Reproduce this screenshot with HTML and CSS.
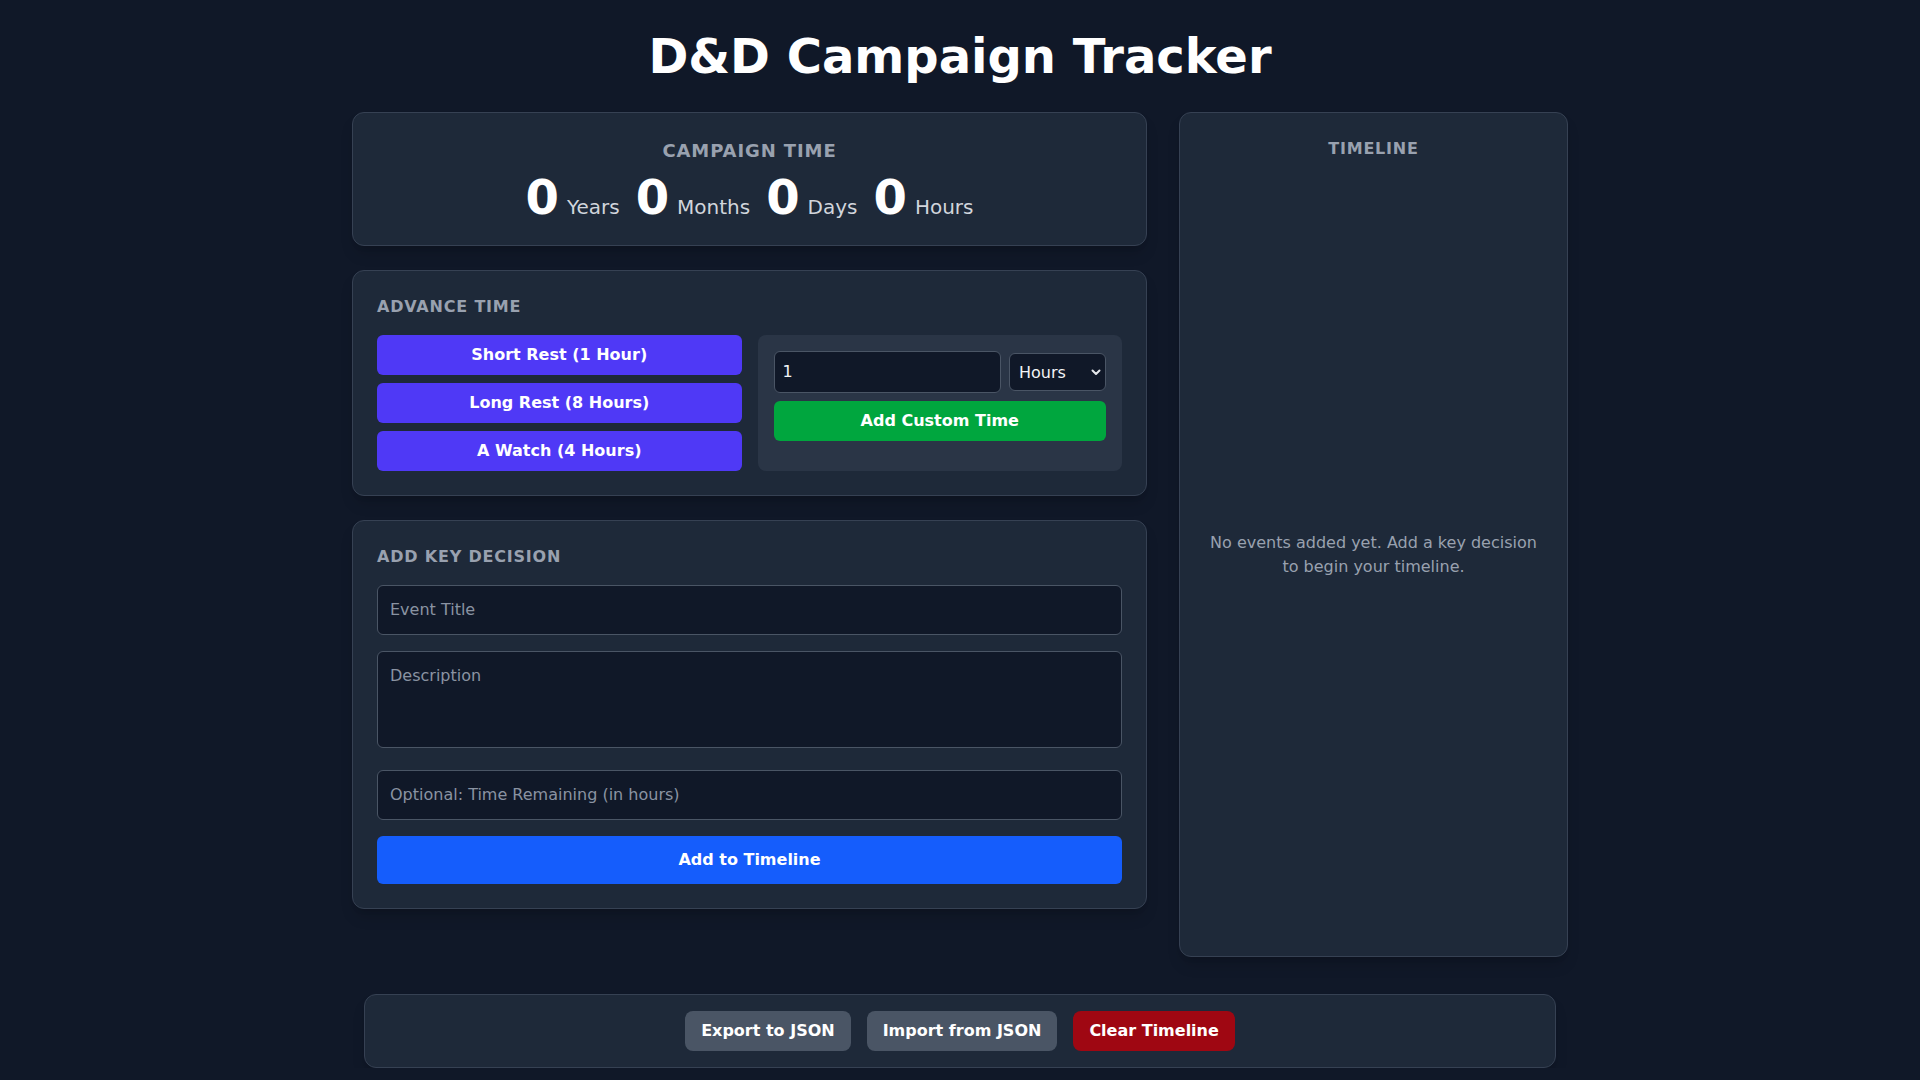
FILE: index.html
```html
<!DOCTYPE html>
<html lang="en">
<head>
<meta charset="utf-8">
<title>D&amp;D Campaign Tracker</title>
<link rel="stylesheet" href="styles.css">
</head>
<body>
<div class="page">
  <h1 class="title">D&amp;D Campaign Tracker</h1>
  <div class="layout">
    <div class="main-col">
      <section class="card time-card">
        <h2 class="time-label">Campaign Time</h2>
        <div class="time-display">
          <div class="unit"><span class="num">0</span><span class="unit-name">Years</span></div>
          <div class="unit"><span class="num">0</span><span class="unit-name">Months</span></div>
          <div class="unit"><span class="num">0</span><span class="unit-name">Days</span></div>
          <div class="unit"><span class="num">0</span><span class="unit-name">Hours</span></div>
        </div>
      </section>

      <section class="card">
        <h2 class="section-label">Advance Time</h2>
        <div class="advance-grid">
          <div class="preset-list">
            <button class="btn btn-indigo">Short Rest (1 Hour)</button>
            <button class="btn btn-indigo">Long Rest (8 Hours)</button>
            <button class="btn btn-indigo">A Watch (4 Hours)</button>
          </div>
          <div class="custom-panel">
            <div class="custom-row">
              <input class="field field-sm" type="number" value="1">
              <div class="select-wrap">
                <select class="unit-select">
                  <option>Hours</option>
                  <option>Days</option>
                  <option>Months</option>
                  <option>Years</option>
                </select>
                <svg class="chev" width="10" height="7" viewBox="0 0 10 7" aria-hidden="true"><path d="M1.5 1.5 L5 5 L8.5 1.5" fill="none" stroke="#e5e7eb" stroke-width="2" stroke-linecap="round" stroke-linejoin="round"/></svg>
              </div>
            </div>
            <button class="btn btn-green">Add Custom Time</button>
          </div>
        </div>
      </section>

      <section class="card">
        <h2 class="section-label">Add Key Decision</h2>
        <input class="field field-lg" type="text" placeholder="Event Title">
        <textarea class="field field-lg textarea" rows="3" placeholder="Description"></textarea>
        <input class="field field-lg" type="text" placeholder="Optional: Time Remaining (in hours)">
        <button class="btn btn-blue btn-lg">Add to Timeline</button>
      </section>
    </div>

    <aside class="card timeline-card">
      <h2 class="timeline-label">Timeline</h2>
      <div class="timeline-empty">
        <p>No events added yet. Add a key decision to begin your timeline.</p>
      </div>
    </aside>
  </div>

  <div class="actions-bar">
    <button class="btn btn-gray btn-bar">Export to JSON</button>
    <button class="btn btn-gray btn-bar">Import from JSON</button>
    <button class="btn btn-red btn-bar">Clear Timeline</button>
  </div>
</div>
</body>
</html>
```

FILE: styles.css
```css
* {
  box-sizing: border-box;
}

html, body {
  margin: 0;
  padding: 0;
}

body {
  background: #101828;
  color: #f3f4f6;
  font-family: "DejaVu Sans", "Noto Sans", sans-serif;
  font-size: 16px;
  line-height: 24px;
}

.page {
  max-width: 1280px;
  margin: 0 auto;
  padding: 32px 32px 0;
}

.title {
  margin: 0 0 32px;
  font-size: 48px;
  line-height: 48px;
  font-weight: 700;
  text-align: center;
  color: #ffffff;
}

.layout {
  display: grid;
  grid-template-columns: 1fr 389px;
  gap: 32px;
  align-items: start;
}

.main-col {
  display: flex;
  flex-direction: column;
  gap: 24px;
}

.card {
  background: #1e2939;
  border: 1px solid #364153;
  border-radius: 12px;
  padding: 24px;
  box-shadow: 0 10px 15px -3px rgba(0, 0, 0, 0.15), 0 4px 6px -4px rgba(0, 0, 0, 0.15);
}

.time-card {
  text-align: center;
}

.time-label {
  margin: 0 0 8px;
  font-size: 18px;
  line-height: 28px;
  font-weight: 700;
  letter-spacing: 0.05em;
  text-transform: uppercase;
  color: #99a1af;
}

.time-display {
  display: flex;
  justify-content: center;
  align-items: baseline;
  gap: 16px;
}

.unit {
  display: flex;
  align-items: baseline;
  gap: 8px;
}

.num {
  font-size: 48px;
  line-height: 48px;
  font-weight: 700;
  color: #ffffff;
}

.unit-name {
  font-size: 20px;
  line-height: 28px;
  color: #d1d5dc;
}

.section-label {
  margin: 0 0 16px;
  font-size: 16px;
  line-height: 24px;
  font-weight: 700;
  letter-spacing: 0.05em;
  text-transform: uppercase;
  color: #99a1af;
}

.advance-grid {
  display: grid;
  grid-template-columns: 1fr 1fr;
  gap: 16px;
}

.preset-list {
  display: flex;
  flex-direction: column;
  gap: 8px;
}

.btn {
  display: block;
  width: 100%;
  border: 0;
  border-radius: 6px;
  padding: 8px 16px;
  font-family: inherit;
  font-size: 16px;
  line-height: 24px;
  font-weight: 700;
  color: #ffffff;
  cursor: pointer;
}

.btn-indigo {
  background: #4f39f6;
}

.btn-green {
  background: #00a63e;
}

.btn-blue {
  background: #155dfc;
}

.btn-lg {
  padding: 12px 16px;
}

.custom-panel {
  background: #2a3546;
  border-radius: 8px;
  padding: 16px;
  display: flex;
  flex-direction: column;
  gap: 8px;
}

.custom-row {
  display: flex;
  align-items: center;
  gap: 8px;
}

.field {
  display: block;
  width: 100%;
  background: #101828;
  border: 1px solid #4a5565;
  border-radius: 6px;
  color: #f3f4f6;
  font-family: inherit;
  font-size: 16px;
  line-height: 24px;
  outline: none;
}

.field::placeholder {
  color: #8a93a2;
  opacity: 1;
}

.field-sm {
  flex: 1;
  min-width: 0;
  padding: 8px;
}

.field-sm::-webkit-inner-spin-button,
.field-sm::-webkit-outer-spin-button {
  -webkit-appearance: none;
  margin: 0;
}

.field-lg {
  padding: 12px;
  margin: 0 0 16px;
}

.textarea {
  height: 97px;
  resize: none;
  margin-bottom: 22px;
}

.select-wrap {
  position: relative;
  flex: none;
}

.unit-select {
  display: block;
  width: 97px;
  height: 38px;
  -webkit-appearance: none;
  appearance: none;
  background: #101828;
  border: 1px solid #4a5565;
  border-radius: 6px;
  padding: 0 24px 0 9px;
  color: #f3f4f6;
  font-family: inherit;
  font-size: 16px;
  outline: none;
}

.chev {
  position: absolute;
  right: 5px;
  top: 16px;
  pointer-events: none;
}

.timeline-card {
  height: 845px;
  display: flex;
  flex-direction: column;
}

.timeline-label {
  margin: 0 0 16px;
  font-size: 16px;
  line-height: 24px;
  font-weight: 700;
  letter-spacing: 0.05em;
  text-transform: uppercase;
  text-align: center;
  color: #99a1af;
}

.timeline-empty {
  flex: 1;
  display: flex;
  align-items: center;
  justify-content: center;
  text-align: center;
}

.timeline-empty p {
  margin: 0;
  color: #99a1af;
}

.actions-bar {
  max-width: 1192px;
  margin: 37px auto 0;
  background: #1e2939;
  border: 1px solid #364153;
  border-radius: 12px;
  padding: 16px;
  display: flex;
  justify-content: center;
  gap: 16px;
  box-shadow: 0 10px 15px -3px rgba(0, 0, 0, 0.15), 0 4px 6px -4px rgba(0, 0, 0, 0.15);
}

.btn-bar {
  width: auto;
  border-radius: 8px;
}

.btn-gray {
  background: #4a5565;
}

.btn-red {
  background: #9f0712;
}
```
